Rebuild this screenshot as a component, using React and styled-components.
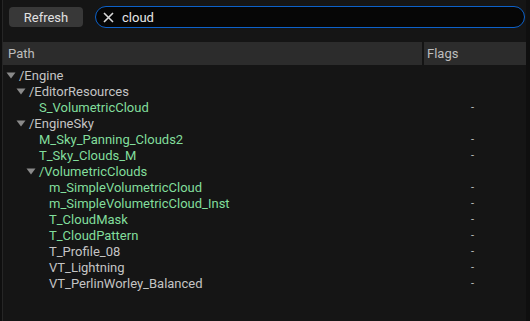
import React from "react";
import styled, { createGlobalStyle } from "styled-components";

const Global = createGlobalStyle`
  html, body { margin: 0; padding: 0; background: #0f0f0f; }
  body { font-family: Roboto, "Noto Sans", sans-serif; }
`;

const Frame = styled.div`
  width: 530px;
  height: 321px;
  box-sizing: border-box;
  background: #0f0f0f;
  padding: 0 4px 0 2px;
  display: flex;
`;

const Panel = styled.div`
  flex: 1;
  background: #151515;
  border-left: 1px solid #262626;
  display: flex;
  flex-direction: column;
`;

const Toolbar = styled.div`
  display: flex;
  align-items: center;
  height: 34px;
  padding: 0 1px 0 6px;
  gap: 12px;
`;

const Button = styled.button`
  width: 74px;
  height: 20px;
  border: none;
  border-radius: 4px;
  background: #383838;
  color: #e2e2e2;
  font-family: Roboto, sans-serif;
  font-size: 13px;
  padding: 0;
  display: flex;
  align-items: center;
  justify-content: center;
`;

const Search = styled.div`
  flex: 1;
  height: 22px;
  box-sizing: border-box;
  border: 1px solid #0d61c9;
  border-radius: 11px;
  background: #060606;
  display: flex;
  align-items: center;
  padding-left: 7px;
  gap: 8px;
  color: #e6e6e6;
  font-size: 13px;
`;

const Header = styled.div`
  margin-top: 8px;
  height: 23px;
  background: #2c2c2c;
  display: flex;
  color: #bdbdbd;
  font-size: 13px;
`;

const HeadCell = styled.div`
  display: flex;
  align-items: center;
  padding-left: ${(p) => p.$pad}px;
  width: ${(p) => (p.$w ? p.$w + "px" : "auto")};
  flex: ${(p) => (p.$w ? "none" : 1)};
  box-sizing: border-box;
  border-left: ${(p) => (p.$divider ? "2px solid #141414" : "none")};
`;

const List = styled.div`
  padding-top: 2px;
  display: flex;
  flex-direction: column;
`;

const Row = styled.div`
  height: 16px;
  display: flex;
  align-items: center;
  font-size: 13px;
`;

const NameCell = styled.div`
  width: 419px;
  box-sizing: border-box;
  flex: none;
  display: flex;
  align-items: center;
  padding-left: ${(p) => 3 + p.$level * 10}px;
  color: ${(p) => (p.$green ? "#82de9c" : "#c4c4c4")};
  white-space: nowrap;
`;

const Arrow = styled.span`
  width: 13px;
  display: inline-flex;
  align-items: center;
  flex: none;
`;

const FlagCell = styled.div`
  flex: 1;
  padding-left: 49px;
  color: #c4c4c4;
  font-size: 11px;
`;

const Tri = () => (
  <svg width="10" height="7" viewBox="0 0 10 7">
    <path d="M0.5 0.5 L9.5 0.5 L5 6.5 Z" fill="#8a8a8a" />
  </svg>
);

const XIcon = () => (
  <svg width="11" height="11" viewBox="0 0 11 11">
    <path d="M1 1 L10 10 M10 1 L1 10" stroke="#d8d8d8" strokeWidth="1.6" />
  </svg>
);

const rows = [
  { name: "/Engine", level: 0, folder: true },
  { name: "/EditorResources", level: 1, folder: true },
  { name: "S_VolumetricCloud", level: 2, green: true },
  { name: "/EngineSky", level: 1, folder: true },
  { name: "M_Sky_Panning_Clouds2", level: 2, green: true },
  { name: "T_Sky_Clouds_M", level: 2, green: true },
  { name: "/VolumetricClouds", level: 2, folder: true, green: true },
  { name: "m_SimpleVolumetricCloud", level: 3, green: true },
  { name: "m_SimpleVolumetricCloud_Inst", level: 3, green: true },
  { name: "T_CloudMask", level: 3, green: true },
  { name: "T_CloudPattern", level: 3, green: true },
  { name: "T_Profile_08", level: 3 },
  { name: "VT_Lightning", level: 3 },
  { name: "VT_PerlinWorley_Balanced", level: 3 },
];

export default function App() {
  return (
    <>
      <Global />
      <Frame>
        <Panel>
          <Toolbar>
            <Button>Refresh</Button>
            <Search>
              <XIcon />
              <span>cloud</span>
            </Search>
          </Toolbar>
          <Header>
            <HeadCell $w={419} $pad={5}>Path</HeadCell>
            <HeadCell $pad={3} $divider>Flags</HeadCell>
          </Header>
          <List>
            {rows.map((r) => (
              <Row key={r.name}>
                <NameCell $level={r.level} $green={r.green}>
                  <Arrow>{r.folder ? <Tri /> : null}</Arrow>
                  {r.name}
                </NameCell>
                <FlagCell>{r.folder ? "" : "-"}</FlagCell>
              </Row>
            ))}
          </List>
        </Panel>
      </Frame>
    </>
  );
}
